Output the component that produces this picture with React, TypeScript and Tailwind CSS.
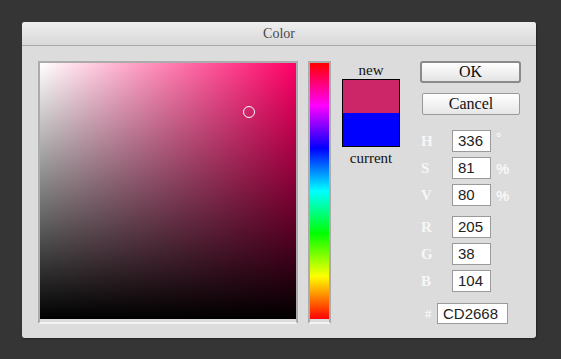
import React from "react";

const serif = { fontFamily: '"Liberation Serif", "DejaVu Serif", serif' };
const sans = { fontFamily: '"Liberation Sans", Arial, sans-serif' };

function Field({ label, value, unit }: { label: string; value: string; unit?: string }) {
  return (
    <div className="flex items-center h-[22px]">
      <span className="w-[32px] pl-[1px] text-[15px] font-bold text-[#f7f7f7] leading-none" style={serif}>
        {label}
      </span>
      <div
        className="w-[39px] h-[22px] border border-[#9a9a9a] bg-white pl-[5px] text-[15px] text-[#222] leading-[20px]"
        style={sans}
      >
        {value}
      </div>
      {unit && (
        <span
          className={
            "ml-[5px] text-[#f7f7f7] font-bold leading-none " +
            (unit === "°" ? "text-[13px] -mt-[8px]" : "text-[15px]")
          }
          style={sans}
        >
          {unit}
        </span>
      )}
    </div>
  );
}

export default function App() {
  return (
    <div className="w-[561px] h-[359px] bg-[#353535] pt-[22px] pl-[22px]">
      <div className="w-[514px] h-[316px] bg-[#dcdcdc] rounded-[3px] flex flex-col overflow-hidden shadow-[1px_1px_2px_rgba(0,0,0,0.35)]">
        <div
          className="h-[24px] shrink-0 bg-gradient-to-b from-[#efefef] to-[#d8d8d8] border-b border-[#a9a9a9] flex items-center justify-center text-[14px] text-[#4a4a4a]"
          style={serif}
        >
          Color
        </div>
        <div className="flex pt-[15px] pl-[16px]">
          {/* Saturation/Value square */}
          <div className="border-2 border-[#ababab] border-b-[#f4f4f4]">
            <div
              className="relative w-[256px] h-[256px]"
              style={{
                background:
                  "linear-gradient(to top, #000, rgba(0,0,0,0)), linear-gradient(to right, #fff, rgba(255,255,255,0)), #ff0066",
              }}
            >
              <div className="absolute left-[203px] top-[43px] w-[12px] h-[12px] rounded-full border border-white" />
            </div>
          </div>
          {/* Hue bar */}
          <div className="ml-[10px] border-2 border-[#ababab] border-b-[#f4f4f4]">
            <div
              className="w-[19px] h-[256px]"
              style={{
                background:
                  "linear-gradient(to bottom, #ff0000 0%, #ff00ff 16.67%, #0000ff 33.33%, #00ffff 50%, #00ff00 66.67%, #ffff00 83.33%, #ff0000 100%)",
              }}
            />
          </div>
          {/* Swatches */}
          <div className="ml-[11px] w-[58px] flex flex-col items-center" style={serif}>
            <div className="h-[18px] text-[15px] text-[#111] leading-[18px]">new</div>
            <div className="w-[58px] h-[68px] border border-black flex flex-col">
              <div className="h-[33px] bg-[#cd2668]" />
              <div className="flex-1 bg-[#0000ff]" />
            </div>
            <div className="mt-[2px] text-[15px] text-[#111] leading-[18px]">current</div>
          </div>
          {/* Controls */}
          <div className="ml-[20px] w-[101px] flex flex-col">
            <button
              className="w-[101px] h-[22px] rounded-[3px] border-2 border-[#8a8a8a] bg-gradient-to-b from-white to-[#e4e4e4] text-[16px] text-[#111] leading-none"
              style={serif}
            >
              OK
            </button>
            <button
              className="ml-[2px] mt-[10px] w-[98px] h-[22px] rounded-[2px] border border-[#9a9a9a] bg-gradient-to-b from-white to-[#e6e6e6] text-[16px] text-[#111] leading-none"
              style={serif}
            >
              Cancel
            </button>
            <div className="mt-[15px] flex flex-col gap-[5px]">
              <Field label="H" value="336" unit="°" />
              <Field label="S" value="81" unit="%" />
              <Field label="V" value="80" unit="%" />
            </div>
            <div className="mt-[10px] flex flex-col gap-[5px]">
              <Field label="R" value="205" />
              <Field label="G" value="38" />
              <Field label="B" value="104" />
            </div>
            <div className="mt-[10px] flex items-center h-[22px]">
              <span className="w-[17px] pl-[5px] text-[13px] font-bold text-[#f7f7f7] leading-none" style={serif}>
                #
              </span>
              <div
                className="w-[71px] h-[21px] border border-[#9a9a9a] bg-white pl-[5px] text-[15px] text-[#222] leading-[19px]"
                style={sans}
              >
                CD2668
              </div>
            </div>
          </div>
        </div>
      </div>
    </div>
  );
}
